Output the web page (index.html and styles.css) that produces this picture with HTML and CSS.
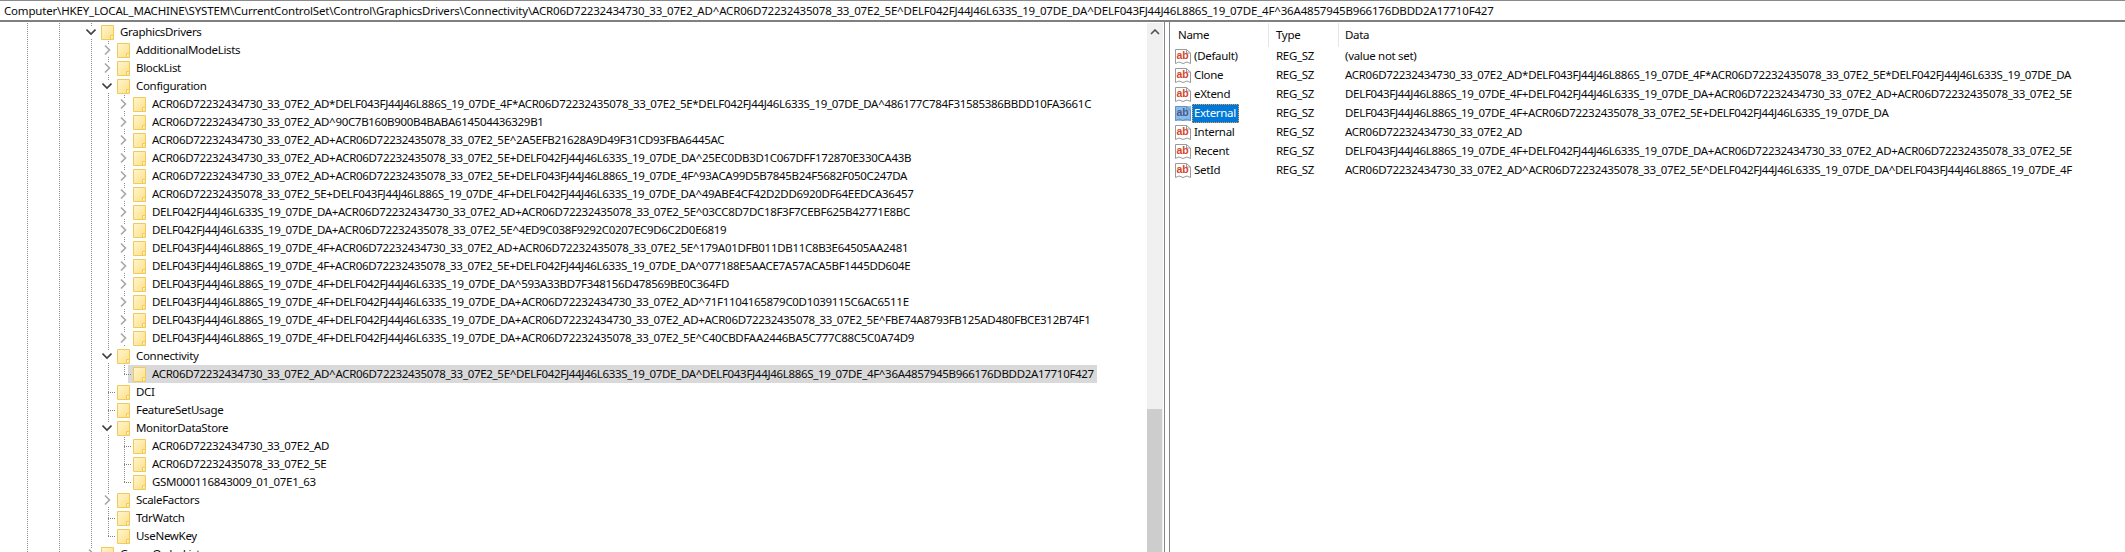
FILE: index.html
```html
<!DOCTYPE html>
<html lang="en">
<head>
<meta charset="utf-8">
<title>Registry Editor</title>
<link rel="stylesheet" href="styles.css">
</head>
<body>
<svg class="defs" aria-hidden="true">
  <defs>
    <linearGradient id="fg" x1="0" y1="0" x2="1" y2="1">
      <stop offset="0" stop-color="#fff6cf"/>
      <stop offset="1" stop-color="#fddf85"/>
    </linearGradient>
    <symbol id="folder" viewBox="0 0 13 15">
      <path d="M.5.5H12.5V14.5H.5Z" fill="url(#fg)" stroke="#efcb5c"/>
      <path d="M9.5 14.5V10.5H12.5" fill="#fff3c4" stroke="#efcb5c"/>
    </symbol>
    <symbol id="closed" viewBox="0 0 10 12">
      <path d="M3 1.5 7.5 6 3 10.5" fill="none" stroke="#a6a6a6" stroke-width="1.6"/>
    </symbol>
    <symbol id="open" viewBox="0 0 10 12">
      <path d="M.5 3.5 5 8 9.5 3.5" fill="none" stroke="#404040" stroke-width="1.6"/>
    </symbol>
    <symbol id="paper" viewBox="0 0 16 15">
      <path d="M.5.5H11.5L15.5 4V14.5L12 13 8 14.5 4 13 .5 14.5Z" fill="#fff" stroke="#9a9a9a"/>
      <path d="M11.5.5V4H15.5" fill="none" stroke="#9a9a9a"/>
    </symbol>
  </defs>
</svg>

<header class="address">Computer\HKEY_LOCAL_MACHINE\SYSTEM\CurrentControlSet\Control\GraphicsDrivers\Connectivity\ACR06D72232434730_33_07E2_AD^ACR06D72232435078_33_07E2_5E^DELF042FJ44J46L633S_19_07DE_DA^DELF043FJ44J46L886S_19_07DE_4F^36A4857945B966176DBDD2A17710F427</header>

<main class="panes">
  <section class="tree">
    <i class="guide g1"></i><i class="guide g2"></i><i class="guide g3"></i><i class="guide g4"></i>
    <i class="guide g5"></i><i class="guide g6"></i><i class="guide g7"></i>

    <div class="row l1"><span class="slot"><svg class="chev"><use href="#open"/></svg></span><svg class="folder"><use href="#folder"/></svg><span class="label">GraphicsDrivers</span></div>
    <div class="row l2"><span class="slot"><svg class="chev"><use href="#closed"/></svg></span><svg class="folder"><use href="#folder"/></svg><span class="label">AdditionalModeLists</span></div>
    <div class="row l2"><span class="slot"><svg class="chev"><use href="#closed"/></svg></span><svg class="folder"><use href="#folder"/></svg><span class="label">BlockList</span></div>
    <div class="row l2"><span class="slot"><svg class="chev"><use href="#open"/></svg></span><svg class="folder"><use href="#folder"/></svg><span class="label">Configuration</span></div>
    <div class="row l3"><span class="slot"><svg class="chev"><use href="#closed"/></svg></span><svg class="folder"><use href="#folder"/></svg><span class="label">ACR06D72232434730_33_07E2_AD*DELF043FJ44J46L886S_19_07DE_4F*ACR06D72232435078_33_07E2_5E*DELF042FJ44J46L633S_19_07DE_DA^486177C784F31585386BBDD10FA3661C</span></div>
    <div class="row l3"><span class="slot"><svg class="chev"><use href="#closed"/></svg></span><svg class="folder"><use href="#folder"/></svg><span class="label">ACR06D72232434730_33_07E2_AD^90C7B160B900B4BABA614504436329B1</span></div>
    <div class="row l3"><span class="slot"><svg class="chev"><use href="#closed"/></svg></span><svg class="folder"><use href="#folder"/></svg><span class="label">ACR06D72232434730_33_07E2_AD+ACR06D72232435078_33_07E2_5E^2A5EFB21628A9D49F31CD93FBA6445AC</span></div>
    <div class="row l3"><span class="slot"><svg class="chev"><use href="#closed"/></svg></span><svg class="folder"><use href="#folder"/></svg><span class="label">ACR06D72232434730_33_07E2_AD+ACR06D72232435078_33_07E2_5E+DELF042FJ44J46L633S_19_07DE_DA^25EC0DB3D1C067DFF172870E330CA43B</span></div>
    <div class="row l3"><span class="slot"><svg class="chev"><use href="#closed"/></svg></span><svg class="folder"><use href="#folder"/></svg><span class="label">ACR06D72232434730_33_07E2_AD+ACR06D72232435078_33_07E2_5E+DELF043FJ44J46L886S_19_07DE_4F^93ACA99D5B7845B24F5682F050C247DA</span></div>
    <div class="row l3"><span class="slot"><svg class="chev"><use href="#closed"/></svg></span><svg class="folder"><use href="#folder"/></svg><span class="label">ACR06D72232435078_33_07E2_5E+DELF043FJ44J46L886S_19_07DE_4F+DELF042FJ44J46L633S_19_07DE_DA^49ABE4CF42D2DD6920DF64EEDCA36457</span></div>
    <div class="row l3"><span class="slot"><svg class="chev"><use href="#closed"/></svg></span><svg class="folder"><use href="#folder"/></svg><span class="label">DELF042FJ44J46L633S_19_07DE_DA+ACR06D72232434730_33_07E2_AD+ACR06D72232435078_33_07E2_5E^03CC8D7DC18F3F7CEBF625B42771E8BC</span></div>
    <div class="row l3"><span class="slot"><svg class="chev"><use href="#closed"/></svg></span><svg class="folder"><use href="#folder"/></svg><span class="label">DELF042FJ44J46L633S_19_07DE_DA+ACR06D72232435078_33_07E2_5E^4ED9C038F9292C0207EC9D6C2D0E6819</span></div>
    <div class="row l3"><span class="slot"><svg class="chev"><use href="#closed"/></svg></span><svg class="folder"><use href="#folder"/></svg><span class="label">DELF043FJ44J46L886S_19_07DE_4F+ACR06D72232434730_33_07E2_AD+ACR06D72232435078_33_07E2_5E^179A01DFB011DB11C8B3E64505AA2481</span></div>
    <div class="row l3"><span class="slot"><svg class="chev"><use href="#closed"/></svg></span><svg class="folder"><use href="#folder"/></svg><span class="label">DELF043FJ44J46L886S_19_07DE_4F+ACR06D72232435078_33_07E2_5E+DELF042FJ44J46L633S_19_07DE_DA^077188E5AACE7A57ACA5BF1445DD604E</span></div>
    <div class="row l3"><span class="slot"><svg class="chev"><use href="#closed"/></svg></span><svg class="folder"><use href="#folder"/></svg><span class="label">DELF043FJ44J46L886S_19_07DE_4F+DELF042FJ44J46L633S_19_07DE_DA^593A33BD7F348156D478569BE0C364FD</span></div>
    <div class="row l3"><span class="slot"><svg class="chev"><use href="#closed"/></svg></span><svg class="folder"><use href="#folder"/></svg><span class="label">DELF043FJ44J46L886S_19_07DE_4F+DELF042FJ44J46L633S_19_07DE_DA+ACR06D72232434730_33_07E2_AD^71F1104165879C0D1039115C6AC6511E</span></div>
    <div class="row l3"><span class="slot"><svg class="chev"><use href="#closed"/></svg></span><svg class="folder"><use href="#folder"/></svg><span class="label">DELF043FJ44J46L886S_19_07DE_4F+DELF042FJ44J46L633S_19_07DE_DA+ACR06D72232434730_33_07E2_AD+ACR06D72232435078_33_07E2_5E^FBE74A8793FB125AD480FBCE312B74F1</span></div>
    <div class="row l3"><span class="slot"><svg class="chev"><use href="#closed"/></svg></span><svg class="folder"><use href="#folder"/></svg><span class="label">DELF043FJ44J46L886S_19_07DE_4F+DELF042FJ44J46L633S_19_07DE_DA+ACR06D72232435078_33_07E2_5E^C40CBDFAA2446BA5C777C88C5C0A74D9</span></div>
    <div class="row l2"><span class="slot"><svg class="chev"><use href="#open"/></svg></span><svg class="folder"><use href="#folder"/></svg><span class="label">Connectivity</span></div>
    <div class="row l3"><span class="slot stub"></span><span class="picked"><svg class="folder"><use href="#folder"/></svg><span class="label">ACR06D72232434730_33_07E2_AD^ACR06D72232435078_33_07E2_5E^DELF042FJ44J46L633S_19_07DE_DA^DELF043FJ44J46L886S_19_07DE_4F^36A4857945B966176DBDD2A17710F427</span></span></div>
    <div class="row l2"><span class="slot stub"></span><svg class="folder"><use href="#folder"/></svg><span class="label">DCI</span></div>
    <div class="row l2"><span class="slot stub"></span><svg class="folder"><use href="#folder"/></svg><span class="label">FeatureSetUsage</span></div>
    <div class="row l2"><span class="slot"><svg class="chev"><use href="#open"/></svg></span><svg class="folder"><use href="#folder"/></svg><span class="label">MonitorDataStore</span></div>
    <div class="row l3"><span class="slot stub"></span><svg class="folder"><use href="#folder"/></svg><span class="label">ACR06D72232434730_33_07E2_AD</span></div>
    <div class="row l3"><span class="slot stub"></span><svg class="folder"><use href="#folder"/></svg><span class="label">ACR06D72232435078_33_07E2_5E</span></div>
    <div class="row l3"><span class="slot stub"></span><svg class="folder"><use href="#folder"/></svg><span class="label">GSM000116843009_01_07E1_63</span></div>
    <div class="row l2"><span class="slot"><svg class="chev"><use href="#closed"/></svg></span><svg class="folder"><use href="#folder"/></svg><span class="label">ScaleFactors</span></div>
    <div class="row l2"><span class="slot stub"></span><svg class="folder"><use href="#folder"/></svg><span class="label">TdrWatch</span></div>
    <div class="row l2"><span class="slot stub"></span><svg class="folder"><use href="#folder"/></svg><span class="label">UseNewKey</span></div>
    <div class="row l1"><span class="slot"><svg class="chev"><use href="#closed"/></svg></span><svg class="folder"><use href="#folder"/></svg><span class="label">GroupOrderList</span></div>
  </section>

  <aside class="scrollbar">
    <svg class="arrow" viewBox="0 0 10 6"><path d="M1 5 5 1 9 5" fill="none" stroke="#505050" stroke-width="1.6"/></svg>
    <div class="thumb"></div>
  </aside>

  <div class="splitter"></div>

  <section class="values">
    <div class="head">
      <span class="hname">Name</span>
      <span class="htype">Type</span>
      <span class="hdata">Data</span>
    </div>
    <div class="val">
      <span class="cname"><svg class="ab" viewBox="0 0 16 15"><use href="#paper"/><text class="abt" x="1.5" y="10">ab</text></svg><span class="nm">(Default)</span></span>
      <span class="ctype">REG_SZ</span>
      <span class="cdata">(value not set)</span>
    </div>
    <div class="val">
      <span class="cname"><svg class="ab" viewBox="0 0 16 15"><use href="#paper"/><text class="abt" x="1.5" y="10">ab</text></svg><span class="nm">Clone</span></span>
      <span class="ctype">REG_SZ</span>
      <span class="cdata">ACR06D72232434730_33_07E2_AD*DELF043FJ44J46L886S_19_07DE_4F*ACR06D72232435078_33_07E2_5E*DELF042FJ44J46L633S_19_07DE_DA</span>
    </div>
    <div class="val">
      <span class="cname"><svg class="ab" viewBox="0 0 16 15"><use href="#paper"/><text class="abt" x="1.5" y="10">ab</text></svg><span class="nm">eXtend</span></span>
      <span class="ctype">REG_SZ</span>
      <span class="cdata">DELF043FJ44J46L886S_19_07DE_4F+DELF042FJ44J46L633S_19_07DE_DA+ACR06D72232434730_33_07E2_AD+ACR06D72232435078_33_07E2_5E</span>
    </div>
    <div class="val">
      <span class="cname"><svg class="ab sel" viewBox="0 0 16 15"><use href="#paper"/><rect class="tint" width="16" height="15"/><text class="abt" x="1.5" y="10">ab</text></svg><span class="nm on">External</span></span>
      <span class="ctype">REG_SZ</span>
      <span class="cdata">DELF043FJ44J46L886S_19_07DE_4F+ACR06D72232435078_33_07E2_5E+DELF042FJ44J46L633S_19_07DE_DA</span>
    </div>
    <div class="val">
      <span class="cname"><svg class="ab" viewBox="0 0 16 15"><use href="#paper"/><text class="abt" x="1.5" y="10">ab</text></svg><span class="nm">Internal</span></span>
      <span class="ctype">REG_SZ</span>
      <span class="cdata">ACR06D72232434730_33_07E2_AD</span>
    </div>
    <div class="val">
      <span class="cname"><svg class="ab" viewBox="0 0 16 15"><use href="#paper"/><text class="abt" x="1.5" y="10">ab</text></svg><span class="nm">Recent</span></span>
      <span class="ctype">REG_SZ</span>
      <span class="cdata">DELF043FJ44J46L886S_19_07DE_4F+DELF042FJ44J46L633S_19_07DE_DA+ACR06D72232434730_33_07E2_AD+ACR06D72232435078_33_07E2_5E</span>
    </div>
    <div class="val">
      <span class="cname"><svg class="ab" viewBox="0 0 16 15"><use href="#paper"/><text class="abt" x="1.5" y="10">ab</text></svg><span class="nm">SetId</span></span>
      <span class="ctype">REG_SZ</span>
      <span class="cdata">ACR06D72232434730_33_07E2_AD^ACR06D72232435078_33_07E2_5E^DELF042FJ44J46L633S_19_07DE_DA^DELF043FJ44J46L886S_19_07DE_4F</span>
    </div>
  </section>
</main>
</body>
</html>
```
FILE: styles.css
```css
* { box-sizing: border-box; }

html, body {
  margin: 0;
  height: 552px;
  overflow: hidden;
  background: #fff;
}

body {
  display: flex;
  flex-direction: column;
  font: 11.5px/18px "Noto Sans", "Open Sans", sans-serif;
  letter-spacing: -0.31px;
  color: #0a0a0a;
}

.defs { position: absolute; width: 0; height: 0; }

.address {
  flex: none;
  height: 22px;
  padding: 1px 0 0 4px;
  border-top: 1px solid #8a8a8a;
  border-bottom: 2px solid #808080;
  line-height: 17px;
  letter-spacing: -0.18px;
  white-space: nowrap;
}

.panes { flex: 1; display: flex; min-height: 0; padding-top: 1px; }

/* tree */
.tree {
  position: relative;
  flex: none;
  width: 1147px;
  overflow: hidden;
}

.row {
  position: relative;
  display: flex;
  align-items: center;
  height: 18px;
  white-space: nowrap;
}
.l1 { padding-left: 86px; }
.l2 { padding-left: 102px; }
.l3 { padding-left: 118px; }

.slot {
  position: relative;
  flex: none;
  display: block;
  width: 10px;
  height: 12px;
  margin-right: 5px;
  background: #fff;
}
.slot.stub { background: none; height: 18px; }
.slot.stub::after {
  content: "";
  position: absolute;
  left: 6px;
  top: 9px;
  width: 7px;
  height: 1px;
  background: repeating-linear-gradient(90deg, #808080 0 1px, transparent 1px 2px);
}

.chev { display: block; width: 10px; height: 12px; }

.folder { flex: none; display: block; width: 13px; height: 15px; margin-right: 6px; }

.picked {
  display: flex;
  align-items: center;
  height: 18px;
  margin-left: -5px;
  padding: 0 3px 0 5px;
  background: #d9d9d9;
}

.guide {
  position: absolute;
  width: 1px;
  background: repeating-linear-gradient(#8c8c8c 0 1px, transparent 1px 2px);
}
.g1 { left: 27px; top: 0; bottom: 0; }
.g2 { left: 59px; top: 0; bottom: 0; }
.g3 { left: 91px; top: 0; bottom: 0; }
.g4 { left: 108px; top: 18px; height: 495px; }
.g5 { left: 124px; top: 72px; height: 252px; }
.g6 { left: 124px; top: 342px; height: 10px; }
.g7 { left: 124px; top: 414px; height: 46px; }

/* scrollbar + splitter */
.scrollbar {
  position: relative;
  flex: none;
  display: flex;
  flex-direction: column;
  width: 16px;
  background: #f0f0f0;
}
.arrow { display: block; width: 10px; height: 6px; margin: 6px 0 0 3px; }
.thumb {
  position: absolute;
  left: 0;
  bottom: 0;
  width: 15px;
  height: 143px;
  background: #cdcdcd;
}

.splitter {
  flex: none;
  width: 6px;
  margin-left: 1px;
  border-left: 1px solid #82878c;
  border-right: 1px solid #82878c;
  margin-top: -1px;
}

/* value list */
.values { flex: 1; min-width: 0; }

.head, .val { display: flex; white-space: nowrap; }
.head { height: 24px; align-items: center; }
.hname { width: 99px; padding-left: 8px; height: 24px; line-height: 24px; border-right: 1px solid #e5e5e5; }
.htype { width: 70px; padding-left: 7px; height: 24px; line-height: 24px; border-right: 1px solid #e5e5e5; }
.hdata { padding-left: 6px; }

.val { height: 19px; align-items: center; }
.cname { display: flex; align-items: center; width: 106px; padding-left: 5px; }
.ctype { width: 69px; padding-bottom: 1px; }
.cdata { padding-bottom: 1px; }

.ab { flex: none; display: block; width: 16px; height: 15px; }
.abt {
  font: bold 10.5px "Liberation Sans", sans-serif;
  letter-spacing: -0.2px;
  fill: #d6452b;
}
.sel .abt { fill: #4a5a8c; }
.tint { fill: #3f8fdc; fill-opacity: 0.6; }

.nm { height: 19px; margin-left: 1px; padding: 0 3px 0 2px; line-height: 17px; }
.nm.on {
  background: #0078d7;
  color: #fff;
  outline: 1px dotted #ff9a3c;
  outline-offset: -1px;
}
```
